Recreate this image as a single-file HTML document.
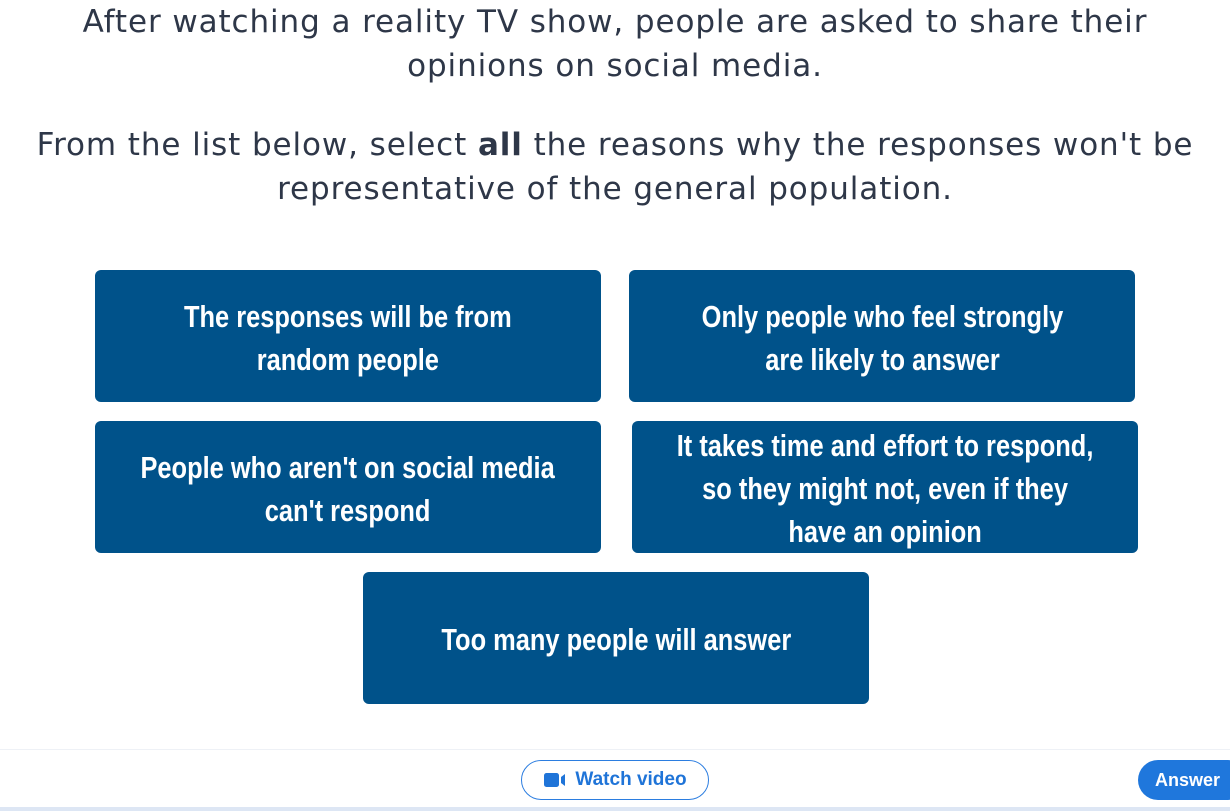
<!DOCTYPE html>
<html><head><style>
*{margin:0;padding:0;box-sizing:border-box}
body{width:1230px;height:811px;background:#fff;position:relative;overflow:hidden;font-family:"Liberation Sans",sans-serif}
.q{position:absolute;left:0;width:1230px;text-align:center;color:#2e3748;font-family:"DejaVu Sans",sans-serif;font-size:31px;line-height:44px;letter-spacing:0.9px;white-space:nowrap}
.b{position:absolute;width:506px;height:132px;background:#00528a;border-radius:6px;color:#fff;display:flex;align-items:center;justify-content:center;text-align:center;font-weight:bold;font-size:31px;line-height:43px;white-space:nowrap;padding-top:3px}
.b span{display:inline-block;transform:scaleX(0.82)}
</style></head><body>
<div class="q" style="top:0">After watching a reality TV show, people are asked to share their<br>opinions on social media.</div>
<div class="q" style="top:123px">From the list below, select <b>all</b> the reasons why the responses won't be<br>representative of the general population.</div>
<div class="b" style="left:95px;top:270px"><span>The responses will be from<br>random people</span></div>
<div class="b" style="left:629px;top:270px"><span>Only people who feel strongly<br>are likely to answer</span></div>
<div class="b" style="left:95px;top:421px"><span>People who aren't on social media<br>can't respond</span></div>
<div class="b" style="left:632px;top:421px"><span>It takes time and effort to respond,<br>so they might not, even if they<br>have an opinion</span></div>
<div class="b" style="left:363px;top:572px"><span>Too many people will answer</span></div>
<div style="position:absolute;left:0;top:749px;width:1230px;height:1px;background:#eef1f6"></div>
<div style="position:absolute;left:0;top:807px;width:1230px;height:4px;background:#dde6f4"></div>
<div style="position:absolute;left:521px;top:760px;width:188px;height:40px;border:1px solid #2b7de0;border-radius:20px;display:flex;align-items:center;justify-content:center;color:#1f74d8;font-weight:bold;font-size:19px">
<svg width="26" height="16" viewBox="0 0 26 16" style="margin-right:6px"><rect x="1" y="1" width="15" height="14" rx="2.5" fill="#1f74d8"/><path d="M18 5 L22 2 V14 L18 11 Z" fill="#1f74d8"/></svg>Watch video</div>
<div style="position:absolute;left:1138px;top:760px;width:110px;height:40px;border-radius:20px;background:#1f77dc;color:#fff;font-weight:bold;font-size:18px;line-height:40px;padding-left:17px">Answer</div>
</body></html>
